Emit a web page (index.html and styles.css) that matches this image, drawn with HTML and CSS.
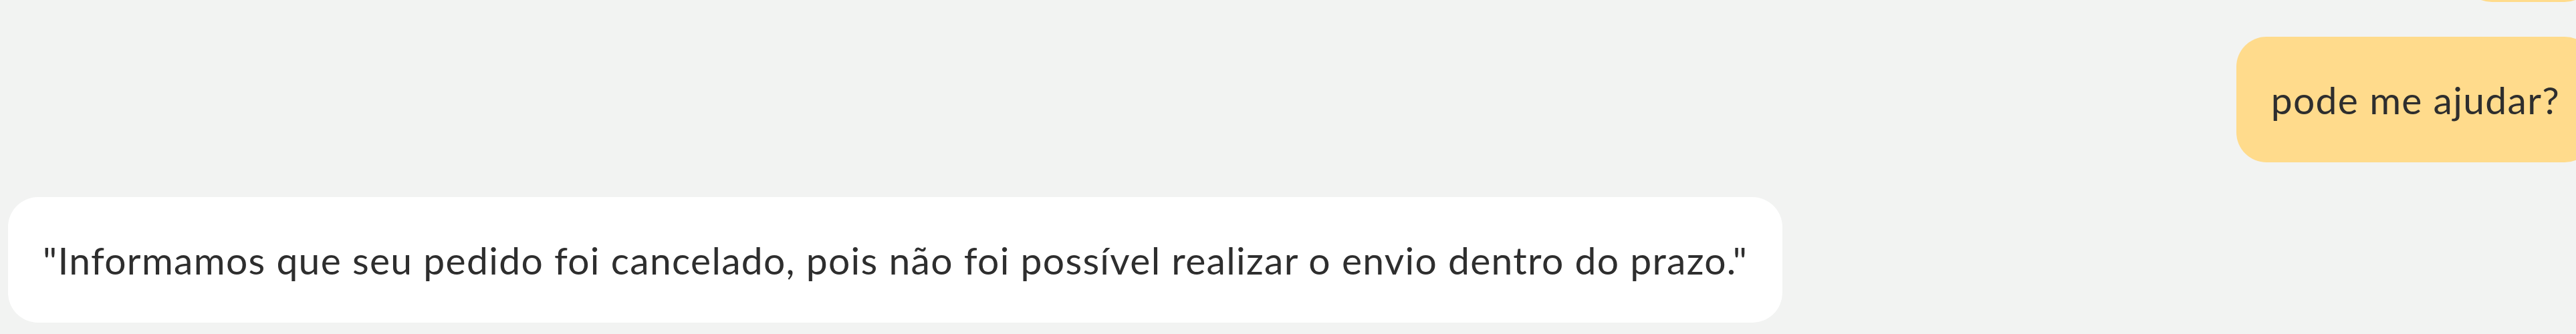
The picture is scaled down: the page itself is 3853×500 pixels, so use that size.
FILE: index.html
```html
<!DOCTYPE html>
<html lang="pt-BR">
<head>
    <meta charset="UTF-8">
    <meta name="viewport" content="width=device-width, initial-scale=1.0">
    <title>Atendimento</title>
    <link rel="stylesheet" href="styles.css">
</head>
<body>

<div class="chat">
    <div class="message sent">
        <p>olá!</p>
    </div>

    <div class="message sent">
        <p>pode me ajudar?</p>
    </div>

    <div class="message received">
        <p>"Informamos que seu pedido foi cancelado, pois não foi possível realizar o envio dentro do prazo."</p>
    </div>
</div>

</body>
</html>
```

FILE: styles.css
```css
body {
    margin: 0;
    background-color: #f2f3f2;
    font-family: Lato, "Open Sans", sans-serif;
    overflow: hidden;
}

/* message list sticks to the bottom, older messages scroll off the top */
.chat {
    height: 500px;
    display: flex;
    flex-direction: column;
    justify-content: flex-end;
    gap: 52px;
    padding: 0 0 17px 12px;
    margin-right: -28px;
    box-sizing: border-box;
}

.message {
    max-width: 80%;
    padding: 55px 52px;
    border-radius: 45px;
}

.message p {
    margin: 0;
    font-size: 57px;
    line-height: 78px;
    letter-spacing: 1.3px;
    color: #2e2e2e;
}

.sent {
    align-self: flex-end;
    background-color: #ffdb8c;
}

.received {
    align-self: flex-start;
    background-color: #fff;
}
```
